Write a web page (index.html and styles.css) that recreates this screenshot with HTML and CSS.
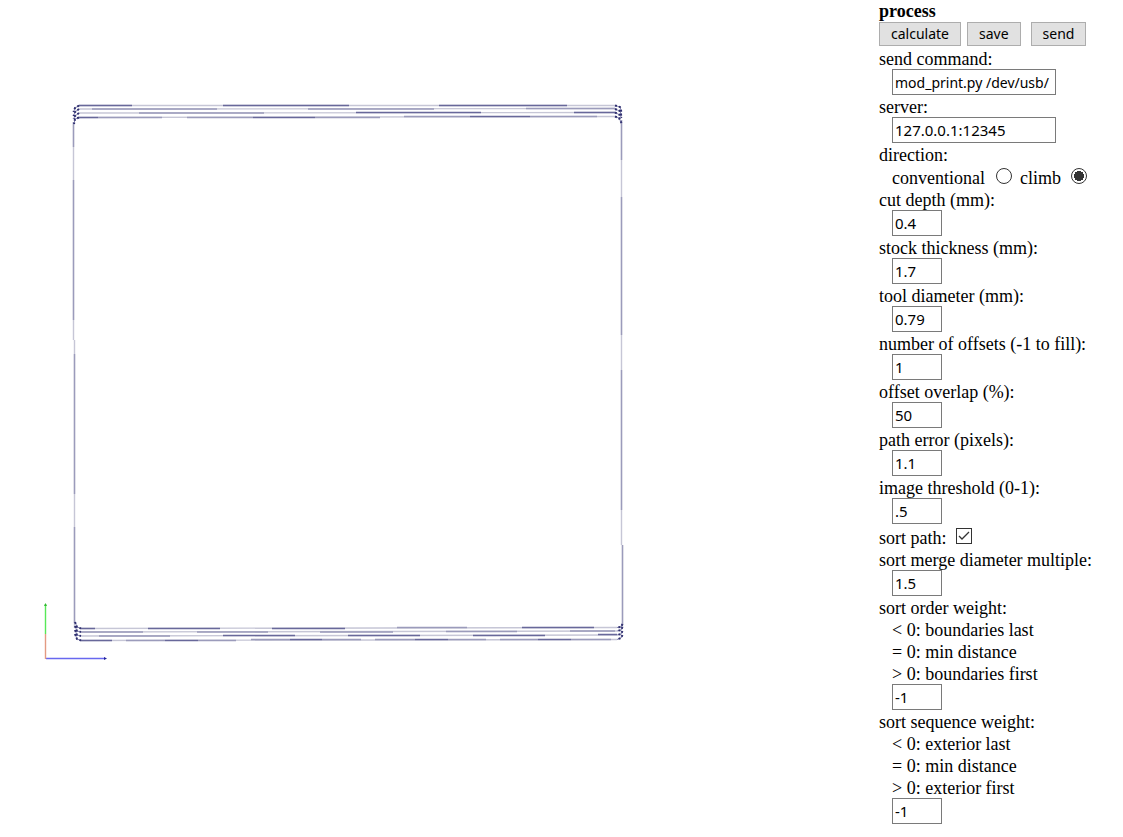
FILE: index.html
```
<!DOCTYPE html>
<html lang="en">
<head>
<meta charset="utf-8">
<title>process</title>
<link rel="stylesheet" href="styles.css">
</head>
<body>
<main class="workspace">
<section class="view" aria-label="Tool path view">
<svg class="path-view" viewBox="0 0 879 820" preserveAspectRatio="xMinYMin meet" role="img" aria-label="Tool path">
<g class="faint">
<path d="M79 105.5H615M79 109L615 108.5M79 113L615 112.5M79 117.5L615 116.5"/>
<path d="M81 628.5L617 627.5M81 632L617 631M81 636L617 635M81 640.5L617 639.5"/>
<path d="M73.5 122V340M74.5 340V628M621.5 120V545M622.5 545V628"/>
</g>
<g class="mid">
<path d="M92 109H217M308 109H434M526 108.5H615M139 113H264M98 117.5H162M187 117.5H253M315 117.5H380M404 116.5H470M530 116.5H597"/>
<path d="M81 632H143M197 632H268M320 632H393M446 631.5H517M570 631H615M126 640.5H165M198 640.5H236M251 639.5H290M322 639.5H361M375 639.5H415M448 639.5H486M500 639.5H538M571 639.5H611M397 627.5H467M99 636H170"/>
<path d="M73.5 122V147M73.5 180V320M74.5 354V494M74.5 527V623M621.5 120V160M621.5 197V335M621.5 370V510M622.5 545V625"/>
</g>
<g class="dark">
<path d="M79 105.5H132M223 105.5H349M439 105.5H567M356 112.5H481M574 112.5H615M79 117.5H98M253 117.5H315M470 116.5H530"/>
<path d="M81 628.5H95M148 628.5H220M272 628.5H345M522 627.5H594M223 635.5H295M348 635.5H420M473 635.5H545M598 634.5H617M81 640.5H112M165 640.5H198M290 639.5H322M415 639.5H448M538 639.5H571"/>
</g>
<g id="corners">
<path class="bend" d="M79 105.5L75 108L73.5 112M79 109L75 112L73.5 116M79 113L75 116L73.5 119M79 117.5L75 119L74 124M615 105.5L620 107L621.5 112M615 109L620 111L621.5 116M615 112.5L620 115L621.5 118M615 116.5L619 118L621.5 123M75 622L77 627L81 628.5M75 626L77 631L81 632M75 630L77 635L81 636M75 634L77 639L81 640.5M622.5 624L621 627L617 627.5M622.5 627L621 630L617 631M622.5 631L621 634L617 635M622.5 635L621 638L617 639.5"/>
<path class="corner" d="M79 105.5L75 108L73.5 112M79 109L75 112L73.5 116M79 113L75 116L73.5 119M79 117.5L75 119L74 124M615 105.5L620 107L621.5 112M615 109L620 111L621.5 116M615 112.5L620 115L621.5 118M615 116.5L619 118L621.5 123M75 622L77 627L81 628.5M75 626L77 631L81 632M75 630L77 635L81 636M75 634L77 639L81 640.5M622.5 624L621 627L617 627.5M622.5 627L621 630L617 631M622.5 631L621 634L617 635M622.5 635L621 638L617 639.5"/>
</g>
<path class="axis-blue" d="M46 658.5H105"/>
<path class="blue-tip" d="M104 657L107 658.5L104 660Z"/>
<path class="axis-red" d="M45.5 659V634"/>
<path class="axis-green" d="M45.5 634V604"/>
<path class="green-tip" d="M44 606L45.5 603L47 606Z"/>
</svg>
</section>
<form class="process">
<h1 class="title">process</h1>
<div class="buttons"><button type="button">calculate</button><button type="button">save</button><button type="button" class="send">send</button></div>
<label class="line" for="command">send command:</label>
<input class="text wide command" id="command" type="text" value="mod_print.py /dev/usb/">
<label class="line" for="server">server:</label>
<input class="text wide" id="server" type="text" value="127.0.0.1:12345">
<div class="line">direction:</div>
<div class="options"><label for="conventional">conventional</label><input class="radio" id="conventional" name="direction" type="radio"><label for="climb">climb</label><input class="radio last" id="climb" name="direction" type="radio" checked></div>
<label class="line" for="depth">cut depth (mm):</label>
<input class="text" id="depth" type="text" value="0.4">
<label class="line" for="thickness">stock thickness (mm):</label>
<input class="text" id="thickness" type="text" value="1.7">
<label class="line" for="diameter">tool diameter (mm):</label>
<input class="text" id="diameter" type="text" value="0.79">
<label class="line" for="offsets">number of offsets (-1 to fill):</label>
<input class="text" id="offsets" type="text" value="1">
<label class="line" for="overlap">offset overlap (%):</label>
<input class="text" id="overlap" type="text" value="50">
<label class="line" for="error">path error (pixels):</label>
<input class="text" id="error" type="text" value="1.1">
<label class="line" for="threshold">image threshold (0-1):</label>
<input class="text" id="threshold" type="text" value=".5">
<div class="sort"><label for="sort">sort path:</label><input class="check" id="sort" type="checkbox" checked></div>
<label class="line" for="merge">sort merge diameter multiple:</label>
<input class="text" id="merge" type="text" value="1.5">
<label class="line" for="order">sort order weight:</label>
<div class="line hint">&lt; 0: boundaries last</div>
<div class="line hint">= 0: min distance</div>
<div class="line hint">&gt; 0: boundaries first</div>
<input class="text" id="order" type="text" value="-1">
<label class="line" for="sequence">sort sequence weight:</label>
<div class="line hint">&lt; 0: exterior last</div>
<div class="line hint">= 0: min distance</div>
<div class="line hint">&gt; 0: exterior first</div>
<input class="text" id="sequence" type="text" value="-1">
</form>
</main>
</body>
</html>
```
FILE: styles.css
```
* { box-sizing: border-box; }
body { margin: 0; background: #fff; color: #000; font: 18px/22px "Liberation Serif", serif; }
.workspace { display: flex; align-items: flex-start; }
.view { flex: 1; min-width: 0; }
.path-view { display: block; width: 100%; fill: none; stroke-width: 1; }
.faint { stroke: #c6c6d6; stroke-width: 1.4; }
.mid { stroke: #9b9bbb; stroke-width: 1.4; }
.dark { stroke: #68689a; stroke-width: 1.4; }
.bend { stroke: #8585b0; }
.corner { stroke: #303070; stroke-width: 2; stroke-dasharray: 2 2; }
.axis-blue { stroke: #6868ef; stroke-width: 1.4; }
.axis-green { stroke: #58e858; stroke-width: 1.4; }
.axis-red { stroke: #e39a82; stroke-width: 1.4; }
.blue-tip { fill: #22229a; }
.green-tip { fill: #30b830; }
.process { display: flex; flex-direction: column; align-items: flex-start; flex: 0 0 244px; }
.title { margin: 0; font-size: 18px; line-height: 22px; }
.line { height: 22px; line-height: 24px; }
.buttons { display: flex; height: 25px; gap: 6px; }
button { height: 24px; padding: 0 11px; border: 1px solid #adadad; background: #e1e1e1; color: #000; font: 14px/22px "Noto Sans", sans-serif; }
.send { margin-left: 4px; }
.text { width: 50px; height: 26px; margin: 0 0 0 13px; padding: 1px 2px; border: 1px solid #7a7a7a; border-radius: 0; background: #fff; color: #000; font: 15px/22px "Noto Sans", sans-serif; }
.wide { width: 164px; }
.command { font-size: 14px; }
.options { display: flex; height: 23px; margin-left: 13px; padding-top: 2px; }
.sort { display: flex; height: 24px; padding-top: 3px; }
.hint { margin-left: 13px; }
.radio, .check { appearance: none; width: 16px; height: 16px; margin: 1px 8px 0 11px; border: 1px solid #333; background: #fff; }
.radio { border-radius: 50%; }
.last { margin: 1px 0 0 10px; }
.check { margin-left: 9px; }
.radio:checked { background: radial-gradient(circle, #333 0 5px, #fff 5px); }
.check:checked { background: url("data:image/svg+xml,%3Csvg xmlns='http://www.w3.org/2000/svg' viewBox='0 0 14 14'%3E%3Cpath d='M2 7l3 3 7-7' fill='none' stroke='%23333' stroke-width='1.3'/%3E%3C/svg%3E"); }
```
